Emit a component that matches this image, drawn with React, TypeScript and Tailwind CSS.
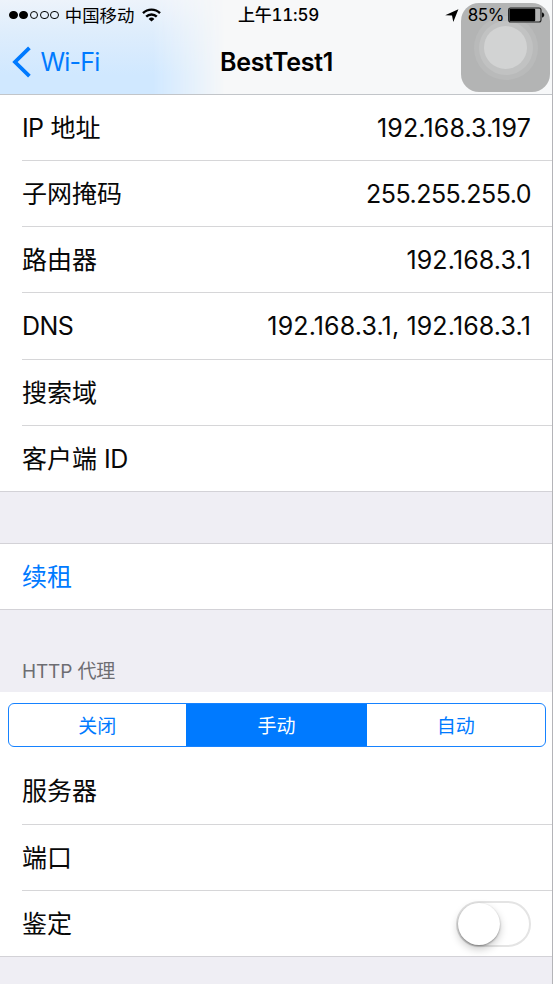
import type { ReactNode } from "react";

const FONT = "font-['Inter','Noto_Sans_CJK_SC',sans-serif]";

function Row({ label, value, height, last = false }: { label: ReactNode; value?: ReactNode; height: string; last?: boolean }) {
  return (
    <div className={`flex bg-white ${height} ${last ? "border-b border-[#d3d2d7]" : "pl-[22px]"}`}>
      <div className={`flex flex-1 items-center justify-between pr-[22px] text-[25px] leading-[30px] whitespace-nowrap text-[#080808] ${last ? "pl-[22px]" : "border-b border-[#d6d6d8]"}`}>
        {label}
        {value}
      </div>
    </div>
  );
}

function Latin({ children }: { children: string }) {
  return <span className="tracking-[-0.6px]">{children}</span>;
}

function Address({ children, tight = false }: { children: string; tight?: boolean }) {
  return <span className={tight ? "tracking-[-0.52px]" : "tracking-[0.13px]"}>{children}</span>;
}

function SignalDots() {
  return (
    <div className="flex gap-[1.6px]">
      {[true, true, false, false, false].map((on, i) => (
        <span key={i} className={`size-[8.7px] rounded-full border border-black ${on ? "bg-black" : ""}`} />
      ))}
    </div>
  );
}

function StatusBar() {
  return (
    <div className="flex h-[30px] items-center text-[17px] leading-[20px] whitespace-nowrap text-black">
      <div className="flex flex-1 items-center pl-[9px]">
        <SignalDots />
        <span className="relative top-px ml-[6px] text-[17.4px]">中国移动</span>
        <svg className="ml-[8px]" width="19" height="14" viewBox="0 0 19 14" fill="none" stroke="black" strokeWidth="2.4">
          <path d="M1 5.2a12 12 0 0 1 17 0" />
          <path d="M4.2 8.7a7.5 7.5 0 0 1 10.6 0" />
          <path d="M9.5 13.6 6.6 10.9a4.2 4.2 0 0 1 5.8 0z" fill="black" stroke="none" />
        </svg>
      </div>
      <span className="ml-[3px] font-medium tracking-[-0.2px] tabular-nums">上午11:59</span>
      <div className="relative z-10 flex flex-1 items-center justify-end pr-[8px]">
        <svg width="14" height="13" viewBox="0 0 14 13" fill="black">
          <path d="M13.4.2.2 6.3 7 6.6 8.3 12.9z" />
        </svg>
        <span className="ml-[9px] tracking-[-0.4px]">85%</span>
        <svg className="ml-[4px]" width="37" height="16" viewBox="0 0 37 16">
          <rect x=".6" y="1" width="32.4" height="14" rx="2" fill="none" stroke="#222" strokeWidth="1.1" />
          <rect x="1.4" y="1.8" width="25.8" height="12.4" rx="1" fill="black" />
          <path d="M34 5.5c3 .4 3 4.6 0 5z" fill="#111" />
        </svg>
      </div>
    </div>
  );
}

function AssistiveTouch() {
  return (
    <div className="absolute top-[3px] left-[461px] flex size-[89px] items-center justify-center rounded-[18px] bg-[#b3b4b4]">
      <div className="flex size-[64px] items-center justify-center rounded-full bg-[#b9baba]">
        <div className="flex size-[54px] items-center justify-center rounded-full bg-[#c1c2c2]">
          <div className="size-[43px] rounded-full bg-[#d2d3d3]" />
        </div>
      </div>
    </div>
  );
}

function Header() {
  return (
    <header className="relative h-[95px] border-b border-[#c2c5c9] bg-[#f7f8f9]">
      <div className="absolute inset-y-0 left-0 w-[225px] bg-[linear-gradient(to_bottom,#edf3fb_0%,#deedfc_35%,#d0e8ff_80%)] [mask-image:linear-gradient(to_right,black_68%,transparent)]" />
      <AssistiveTouch />
      <div className="relative">
        <StatusBar />
        <div className="flex h-[64px] items-center whitespace-nowrap">
          <div className="flex flex-1 items-center text-[#007aff]">
            <svg className="ml-[12px]" width="20" height="32" viewBox="0 0 20 32" fill="none" stroke="currentColor" strokeWidth="3.8">
              <path d="M17.4 1.8 3 16l14.4 14.2" />
            </svg>
            <span className="ml-[8.5px] text-[25px] leading-[30px] tracking-[-0.8px]">Wi-Fi</span>
          </div>
          <h1 className="text-[25px] leading-[30px] font-semibold tracking-[-0.25px] text-black">BestTest1</h1>
          <div className="flex-1" />
        </div>
      </div>
    </header>
  );
}

function Segments() {
  return (
    <div className="h-[66px] bg-white pt-[11px] pl-[7.5px]">
      <div className="flex h-[44px] w-[538px] overflow-hidden rounded-[6px] border-[1.5px] border-[#1682ff] text-[19px] text-[#007aff]">
        <div className="flex w-[177.5px] items-center justify-center pt-[4px]">关闭</div>
        <div className="flex w-[181px] items-center justify-center bg-[#007aff] pt-[4px] text-white">手动</div>
        <div className="flex flex-1 items-center justify-center pt-[4px]">自动</div>
      </div>
    </div>
  );
}

function Toggle() {
  return (
    <div className="h-[46px] w-[75px] rounded-full border-2 border-[#e4e4e4] bg-white">
      <div className="size-[42px] rounded-full bg-white shadow-[0_4px_8px_rgba(0,0,0,0.22),0_1px_2px_rgba(0,0,0,0.35)]" />
    </div>
  );
}

export default function App() {
  return (
    <div className={`relative h-[984px] w-[553px] overflow-hidden bg-[#efeef4] ${FONT}`}>
      <Header />
      <Row height="h-[66px]" label={<span><Latin>IP</Latin> 地址</span>} value={<Address>192.168.3.197</Address>} />
      <Row height="h-[66px]" label="子网掩码" value={<Address tight>255.255.255.0</Address>} />
      <Row height="h-[66px]" label="路由器" value={<Address>192.168.3.1</Address>} />
      <Row height="h-[67px]" label={<Latin>DNS</Latin>} value={<Address>192.168.3.1, 192.168.3.1</Address>} />
      <Row height="h-[66px]" label="搜索域" />
      <Row height="h-[66px]" last label={<span>客户端 <Latin>ID</Latin></span>} />
      <div className="mt-[51px] border-t border-[#d3d2d7]">
        <Row height="h-[66px]" last label={<span className="text-[#007aff]">续租</span>} />
      </div>
      <div className="flex h-[82px] items-end pb-[8px] pl-[22px] text-[19px] leading-[24px] tracking-[-0.15px] text-[#6d6d72]">HTTP 代理</div>
      <Segments />
      <Row height="h-[67px]" label="服务器" />
      <Row height="h-[66px]" label="端口" />
      <Row height="h-[66px]" last label="鉴定" value={<Toggle />} />
      <div className="absolute inset-y-0 right-0 w-px bg-[#b4b4b8]" />
    </div>
  );
}
